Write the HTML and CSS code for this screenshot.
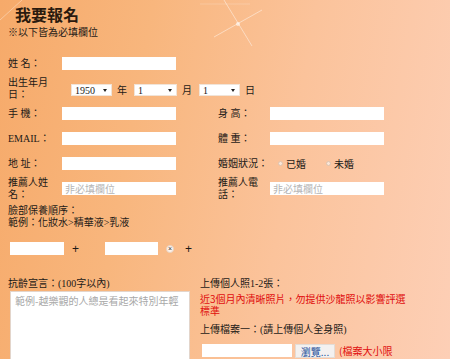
FILE: index.html
```html
<!DOCTYPE html>
<html lang="zh-Hant">
<head>
<meta charset="utf-8">
<link rel="stylesheet" href="styles.css">
</head>
<body>
<svg class="sparkle" width="450" height="60" viewBox="0 0 450 60">
  <line x1="0" y1="20" x2="22" y2="0" stroke="#fff" stroke-opacity="0.35" stroke-width="1"/>
  <line x1="224" y1="0" x2="252" y2="46" stroke="#fff" stroke-opacity="0.45" stroke-width="1"/>
  <line x1="214" y1="37" x2="262" y2="10" stroke="#fff" stroke-opacity="0.45" stroke-width="1"/>
  <line x1="200" y1="4" x2="250" y2="4" stroke="#fff" stroke-opacity="0.2" stroke-width="1"/>
  <circle cx="238" cy="24" r="2" fill="#fff" fill-opacity="0.6"/>
</svg>
<div class="head">
  <h1 class="title">我要報名</h1>
  <p class="note">※以下皆為必填欄位</p>
</div>

<div class="form-grid">
  <div class="lbl">姓 名：</div>
  <div class="fld"><input class="inp" type="text"></div>
  <div></div><div></div>

  <div class="lbl">出生年月日：</div>
  <div class="fld birth">
    <span class="sel w41">1950<i class="arr"></i></span><span class="unit">年</span>
    <span class="sel w43">1<i class="arr"></i></span><span class="unit">月</span>
    <span class="sel w41">1<i class="arr"></i></span><span class="unit">日</span>
  </div>

  <div class="lbl">手 機：</div>
  <div class="fld"><input class="inp" type="text"></div>
  <div class="lbl">身 高：</div>
  <div class="fld"><input class="inp" type="text"></div>

  <div class="lbl">EMAIL：</div>
  <div class="fld"><input class="inp" type="text"></div>
  <div class="lbl">體 重：</div>
  <div class="fld"><input class="inp" type="text"></div>

  <div class="lbl">地 址：</div>
  <div class="fld"><input class="inp" type="text"></div>
  <div class="lbl">婚姻狀況：</div>
  <div class="fld radios">
    <span class="radio"></span><span class="rtxt">已婚</span>
    <span class="radio"></span><span class="rtxt">未婚</span>
  </div>

  <div class="lbl">推薦人姓名：</div>
  <div class="fld"><input class="inp" type="text" placeholder="非必填欄位"></div>
  <div class="lbl">推薦人電話：</div>
  <div class="fld"><input class="inp" type="text" placeholder="非必填欄位"></div>
</div>

<p class="care">臉部保養順序：<br>範例：化妝水&gt;精華液&gt;乳液</p>

<div class="steps">
  <input class="inp small" type="text">
  <span class="plus first">+</span>
  <input class="inp small second" type="text">
  <span class="xbtn">×</span>
  <span class="plus">+</span>
</div>

<div class="bottom">
  <div class="left-col">
    <p class="line">抗齡宣言：(100字以內)</p>
    <textarea class="area" placeholder="範例-越樂觀的人總是看起來特別年輕"></textarea>
  </div>
  <div class="right-col">
    <p class="line">上傳個人照1-2張：</p>
    <p class="red wrap">近3個月內清晰照片，勿提供沙龍照以影響評選標準</p>
    <p class="line up1">上傳檔案一：(請上傳個人全身照)</p>
    <div class="file-row">
      <span class="file-box"></span>
      <span class="browse">瀏覽...</span>
      <span class="red-inline">(檔案大小限</span>
    </div>
  </div>
</div>
</body>
</html>
```

FILE: styles.css
```css
* { box-sizing: border-box; }

html, body {
  margin: 0;
  padding: 0;
}

body {
  width: 450px;
  height: 359px;
  overflow: hidden;
  position: relative;
  font-family: "Liberation Serif", "Noto Sans CJK TC", serif;
  font-size: 10px;
  color: #1d1a17;
  background: linear-gradient(100deg, #f6aa6a 0%, #f8b67d 30%, #fbc39b 62%, #fdcfb6 100%);
}

p { margin: 0; }

.sparkle {
  position: absolute;
  left: 0;
  top: 0;
  pointer-events: none;
}

.head {
  height: 51px;
  padding-top: 5px;
}

.title {
  margin: 0 0 0 15px;
  font: bold 16px/19px "Noto Sans CJK TC", sans-serif;
  color: #2a1a0e;
}

.note {
  margin: 2px 0 0 8px;
  line-height: 12px;
  font-family: "Noto Sans CJK TC", sans-serif;
}

.form-grid {
  margin-left: 8px;
  display: grid;
  grid-template-columns: 54px 156px 52px 114px;
  grid-auto-rows: 25px;
  align-items: center;
}

.lbl {
  width: 50px;
  line-height: 12px;
  font-family: "Liberation Serif", "Noto Sans CJK TC", serif;
}

.fld {
  display: flex;
  align-items: center;
}

.inp {
  display: block;
  width: 114px;
  height: 13px;
  margin: 0;
  padding: 0 3px;
  border: none;
  background: #fff;
  font-family: "Noto Sans CJK TC", sans-serif;
  font-size: 10px;
  line-height: 13px;
  color: #333;
  outline: none;
}

.inp::placeholder { color: #b5b5b5; }

.birth {
  grid-column: 2 / 5;
  margin-left: 9px;
  margin-top: 2px;
}

.sel {
  position: relative;
  display: inline-block;
  height: 12px;
  line-height: 12px;
  padding-left: 3px;
  background: #fff;
  border: 1px solid #f1e4d8;
  font-size: 10px;
}

.w41 { width: 41px; }
.w43 { width: 43px; }

.arr {
  position: absolute;
  right: 4px;
  top: 4px;
  width: 0;
  height: 0;
  border-left: 2px solid transparent;
  border-right: 2px solid transparent;
  border-top: 3px solid #222;
}

.unit {
  margin: 0 7px 0 5px;
  font-family: "Noto Sans CJK TC", sans-serif;
}

.radios { padding-left: 8px; }

.radio {
  width: 5px;
  height: 5px;
  border-radius: 50%;
  border: 1px solid #dcc4b0;
  background: #fbe6d8;
  margin-right: 3px;
}

.rtxt {
  font-family: "Noto Sans CJK TC", sans-serif;
  margin-right: 20px;
}

.care {
  margin: 4px 0 0 8px;
  line-height: 12px;
  font-family: "Liberation Serif", "Noto Sans CJK TC", serif;
}

.steps {
  display: flex;
  align-items: center;
  margin: 13px 0 0 10px;
  height: 13px;
}

.small { width: 54px; }
.second { width: 53px; }

.plus {
  font-size: 12px;
  margin: 0 8px;
  font-family: "Liberation Sans", sans-serif;
}

.plus.first { margin: 0 26px 0 8px; }

.xbtn {
  width: 8px;
  height: 8px;
  border-radius: 50%;
  background: #fff4ec;
  border: 1px solid #e8d2c2;
  font: 7px/6px "Liberation Sans", sans-serif;
  text-align: center;
  color: #333;
  margin-left: 8px;
  margin-right: 3px;
}

.bottom {
  display: flex;
  margin-top: 23px;
}

.left-col {
  width: 200px;
  padding-left: 8px;
}

.line {
  line-height: 12px;
  font-family: "Liberation Serif", "Noto Sans CJK TC", serif;
}

.area {
  display: block;
  width: 180px;
  height: 80px;
  margin: 1px 0 0 2px;
  padding: 3px 4px;
  border: 1px solid #e3d5cb;
  background: #fff;
  resize: none;
  font-family: "Noto Sans CJK TC", sans-serif;
  font-size: 10px;
  line-height: 12px;
  outline: none;
}

.area::placeholder { color: #a8a8a8; }

.right-col {
  width: 212px;
}

.red {
  color: #e00d0d;
  line-height: 12px;
  margin-top: 3px;
  font-family: "Noto Sans CJK TC", sans-serif;
}

.up1 { margin-top: 7px; }

.file-row {
  display: flex;
  align-items: center;
  margin-top: 7px;
  padding-left: 2px;
}

.file-box {
  width: 90px;
  height: 13px;
  background: #fff;
}

.browse {
  margin-left: 3px;
  width: 40px;
  height: 14px;
  line-height: 14px;
  text-align: center;
  background: #f3f1f0;
  border: 1px solid #e3dcd6;
  color: #23509a;
  font-family: "Noto Sans CJK TC", sans-serif;
}

.red-inline {
  margin-left: 4px;
  color: #e00d0d;
  font-family: "Noto Sans CJK TC", sans-serif;
}
```
